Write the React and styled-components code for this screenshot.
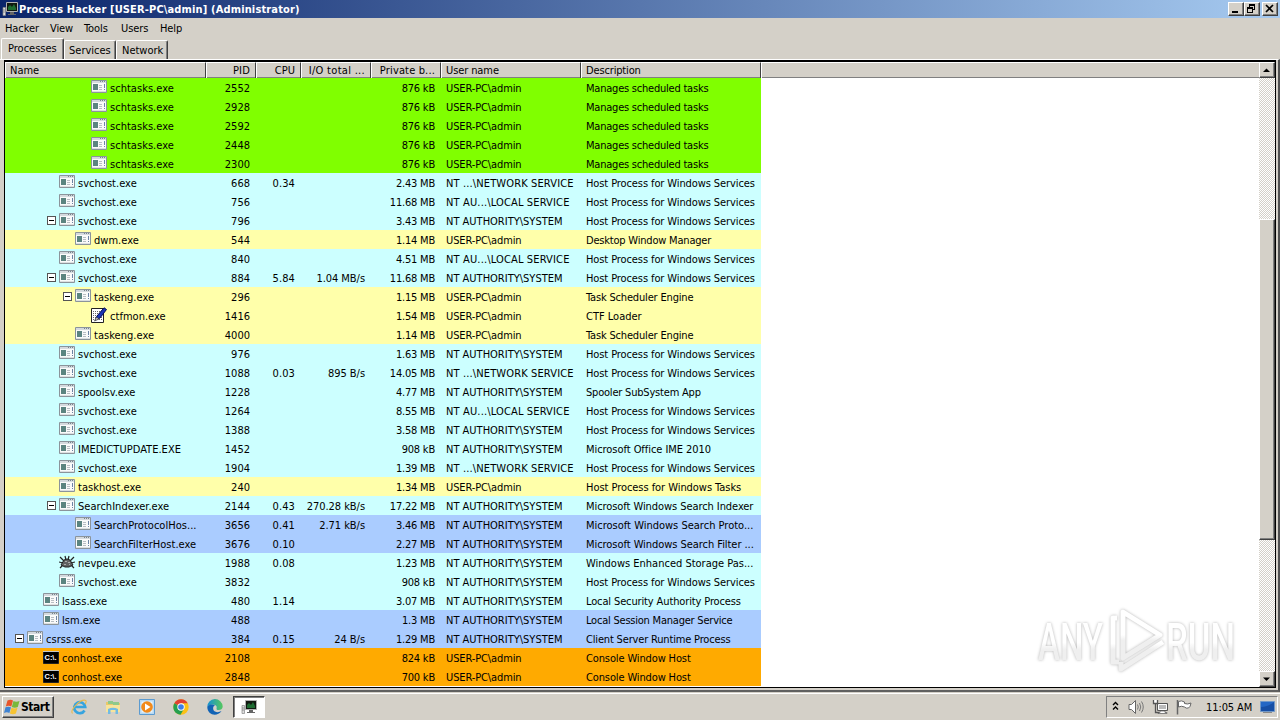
import React from "react";
import styled, { createGlobalStyle } from "styled-components";

const GlobalStyle = createGlobalStyle`
  * { box-sizing: border-box; }
  body {
    margin: 0;
    overflow: hidden;
    background: #d4d0c8;
    color: #000;
    font: 11px "DejaVu Sans Condensed", "DejaVu Sans", sans-serif;
    font-stretch: condensed;
  }
  svg { display: block; flex: none; }
`;

const Desktop = styled.div`
  width: 1280px;
  height: 720px;
  display: flex;
  flex-direction: column;
  white-space: pre;
`;

const TitleBar = styled.header`
  height: 18px;
  padding: 0 2px;
  display: flex;
  align-items: center;
  background: linear-gradient(90deg, #0a246a 0%, #a6caf0 100%);
`;

const Title = styled.span`
  margin-left: 1px;
  color: #fff;
  font-weight: bold;
  line-height: 19px;
  letter-spacing: 0.14px;
`;

const WindowButtons = styled.div`
  margin-left: auto;
  display: flex;
`;

const WindowButton = styled.span`
  width: 16px;
  height: 14px;
  margin-left: ${(p) => p.$gap || 0}px;
  background: #d4d0c8;
  border: 1px solid;
  border-color: #fff #404040 #404040 #fff;
  box-shadow: inset -1px -1px #808080;
`;

const MenuBar = styled.nav`
  height: 20px;
  display: flex;
  padding-left: 5px;
  line-height: 21px;
`;

const MenuItem = styled.span`
  width: ${(p) => p.$width}px;
  letter-spacing: -0.1px;
`;

const Tabs = styled.div`
  height: 21px;
  display: flex;
  align-items: flex-end;
  padding-left: 1px;
`;

const Tab = styled.span`
  width: ${(p) => p.$width}px;
  height: ${(p) => (p.$active ? 21 : 19)}px;
  padding-left: ${(p) => p.$pad}px;
  line-height: 19px;
  border: 1px solid;
  border-width: 1px 1px 0;
  border-color: #fff #404040 #fff #fff;
  box-shadow: inset -1px 0 #808080;
  border-radius: 2px 2px 0 0;
`;

const Panel = styled.main`
  height: 633px;
  display: flex;
  padding: 0 2px 2px 4px;
  border-top: 1px solid #fff;
  border-right: 2px solid #505050;
  border-bottom: 2px solid #606060;
`;

const ListView = styled.section`
  flex: 1;
  display: flex;
  border: 1px solid #000;
  border-top-width: 2px;
  background: #fff;
  min-width: 0;
`;

const Table = styled.div`
  flex: 1;
`;

const columns = "201px 50px 45px 70px 70px 140px 180px";

const HeaderRow = styled.div`
  height: 16px;
  display: grid;
  grid-template-columns: ${columns} 1fr;
  background: #d4d0c8;
  border-bottom: 1px solid #404040;
`;

const HeaderCell = styled.span`
  border-right: ${(p) => (p.$last ? 0 : 1)}px solid #404040;
  border-left: 1px solid #fff;
  border-top: 1px solid #fff;
  box-shadow: inset 0 -1px #808080;
  padding: 0 5px 0 4px;
  line-height: 15px;
  letter-spacing: ${(p) => p.$track || 0}px;
  text-align: ${(p) => (p.$right ? "right" : "left")};
`;

const ProcessRow = styled.div`
  width: 756px;
  height: 19px;
  display: grid;
  grid-template-columns: ${columns};
  background: ${(p) => p.$color};
  line-height: 22px;
`;

const NameCell = styled.span`
  height: 19px;
  display: flex;
  align-items: flex-start;
  padding-left: ${(p) => p.$indent}px;
`;

const IconSlot = styled.span`
  padding-top: 1px;
`;

const NameText = styled.span`
  margin-left: 3px;
  letter-spacing: 0.03px;
`;

const Cell = styled.span`
  height: 19px;
  padding: 0 6px 0 5px;
  letter-spacing: ${(p) => p.$track || 0}px;
  text-align: ${(p) => (p.$right ? "right" : "left")};
`;

const ScrollBar = styled.div`
  width: 16px;
  display: flex;
  flex-direction: column;
  background: repeating-conic-gradient(#fff 0 25%, #d4d0c8 0 50%) 0 0 / 2px 2px;
`;

const ScrollButton = styled.span`
  height: 16px;
  display: grid;
  place-items: center;
  background: #d4d0c8;
  border: 1px solid;
  border-color: #fff #404040 #404040 #fff;
  box-shadow: inset -1px -1px #808080;
`;

const ScrollThumb = styled(ScrollButton)`
  height: 321px;
  margin: 141px 0 auto;
`;

const Taskbar = styled.footer`
  height: 27px;
  margin-top: 1px;
  display: flex;
  align-items: flex-start;
  padding: 2px 2px 0;
  border-top: 1px solid #fff;
`;

const StartButton = styled.div`
  width: 52px;
  height: 22px;
  display: flex;
  align-items: center;
  padding-left: 1px;
  border: 1px solid;
  border-color: #fff #404040 #404040 #fff;
  box-shadow: inset -1px -1px #808080;
  font-size: 12px;
  font-weight: bold;
  letter-spacing: -0.45px;
`;

const Launchers = styled.div`
  display: flex;
  gap: 18px;
  margin: 3px 0 0 17px;
`;

const ActiveTask = styled.div`
  width: 32px;
  height: 22px;
  margin-left: 10px;
  padding: 2px 0 0 7px;
  background: #fff;
  border: 1px solid;
  border-color: #404040 #fff #fff #404040;
  box-shadow: inset 1px 1px #808080;
`;

const Tray = styled.div`
  width: 172px;
  height: 22px;
  margin-left: auto;
  display: flex;
  align-items: center;
  gap: 8px;
  padding-left: 5px;
  border: 1px solid;
  border-color: #808080 #fff #fff #808080;
`;

const Clock = styled.span`
  width: 46px;
  margin-left: 6px;
  letter-spacing: -0.1px;
`;

const Watermark = styled.div`
  position: absolute;
  left: 1030px;
  top: 600px;
  filter: drop-shadow(0 0 1.5px #b4b4b4);
`;

const WatermarkText = styled.text`
  font: 500 52px Roboto, sans-serif;
  fill: url(#fade);
`;

const AppIcon = () => (
  <svg width="16" height="16" viewBox="0 0 16 16">
    <path d="M1 6.5h2.5v8H1z" fill="#ddd" stroke="#888" strokeWidth=".7" />
    <path d="M1.5 9h1M1.5 11h1" stroke="#555" />
    <path d="M4.5 1.5h11v9h-11z" fill="#101810" stroke="#b0b0b0" />
    <path d="M6 9V6l2-2 2 2 2-3 2 4v2z" fill="#1d6b30" />
    <path d="M8 11h4v2h2v1H6v-1h2z" fill="#666" />
  </svg>
);

const ExeIcon = () => (
  <svg width="16" height="16" viewBox="0 0 16 16">
    <path d="M.5 1.5h15v12H.5z" fill="#fafafa" stroke="#8b949b" />
    <path d="M1 2h14v2H1z" fill="#d5dade" />
    <path d="M9 2.5h1M11 2.5h1M13 2.5h1" stroke="#77838d" />
    <path d="M2 5h5v6H2z" fill="#5b8480" />
    <path d="M8 6.5h3M8 8.5h3M8 10.5h3" stroke="#b8bec3" />
    <path d="M13.5 5v4M13.5 10v1" stroke="#6c84a5" />
    <path d="M1 12.5h14" stroke="#dcdfe0" />
  </svg>
);

const PenIcon = () => (
  <svg width="16" height="16" viewBox="0 0 16 16">
    <path d="M.5 1.5h12v14H.5z" fill="#fff" stroke="#222" />
    <path d="M2 4.5h9M2 6.5h9M2 8.5h9M2 10.5h9M2 12.5h9" stroke="#666" strokeDasharray="1 1" />
    <path d="M4.5 13l1.5-4L13 .8l2.5 1.7L9 11z" fill="#1a35b5" stroke="#000b55" />
    <path d="M3.5 14l2-4 2.5 2z" fill="#ccc" stroke="#222" strokeWidth=".6" />
  </svg>
);

const BugIcon = () => (
  <svg width="16" height="16" viewBox="0 0 16 16">
    <path d="M1 3l4 4M6 2l1 4M10 2L9 6M15 3l-4 4M0 8l4 1M16 8l-4 1M1 14l3-3M15 14l-3-3" stroke="#222" strokeWidth="1.2" />
    <path d="M2 11l3-5 3-1 3 1 3 5-4 2H6z" fill="#606060" stroke="#222" />
    <path d="M6 7.5h2M9 8.5h2M5 10.5h2M10 10.5h1" stroke="#aaa" />
  </svg>
);

const ConsoleText = styled.text`
  font: bold 7px "Liberation Sans", sans-serif;
  fill: #fff;
`;

const ConsoleIcon = () => (
  <svg width="16" height="16" viewBox="0 0 16 16">
    <path d="M.5 2.5h15v12H.5z" fill="#000" stroke="#222" />
    <path d="M0 2.5h16" stroke="#c8c8c8" />
    <ConsoleText x="1.5" y="11" textLength="12" lengthAdjust="spacingAndGlyphs">C:\.</ConsoleText>
  </svg>
);

const icons = { exe: ExeIcon, pen: PenIcon, bug: BugIcon, console: ConsoleIcon };

const Toggle = () => (
  <svg width="12" height="19" viewBox="0 0 12 19" shapeRendering="crispEdges">
    <path d="M.5 5.5h8v8h-8z" fill="#fff" stroke="#555" />
    <path d="M2 9.5h5" stroke="#000" />
  </svg>
);

const Arrow = ({ down }) => (
  <svg width="8" height="5" viewBox="0 0 8 5">
    <path d={down ? "M0 .5h7L3.5 4z" : "M0 4h7L3.5 .5z"} />
  </svg>
);

const MinimizeGlyph = () => (
  <svg width="13" height="11" viewBox="0 0 13 11">
    <path d="M3 8h6v2H3z" />
  </svg>
);

const RestoreGlyph = () => (
  <svg width="13" height="11" viewBox="0 0 13 11" shapeRendering="crispEdges">
    <path d="M4 1h6v2H4zM4 3h1v1H4zM9 3h1v4H9zM8 6h1v1H8zM2 4h6v2H2zM2 6h1v4H2zM7 6h1v4H7zM2 9h6v1H2z" />
  </svg>
);

const CloseGlyph = () => (
  <svg width="13" height="11" viewBox="0 0 13 11">
    <path d="M3 2l7 7M10 2L3 9" stroke="#000" strokeWidth="1.7" />
  </svg>
);

const WindowsFlag = () => (
  <svg width="17" height="16" viewBox="0 0 17 16">
    <path d="M3.5 1.5q3-1.5 5.500 0L7.300 7.500q-2.800-1.300-5.500 0z" fill="#e8552a" />
    <path d="M9.500 2q2.700 1.500 6 0l-1.700 6q-3 1.500-6 0z" fill="#79b83a" />
    <path d="M1.500 8.300q2.700-1.300 5.500 0l-1.600 5.700q-2.600-1.500-5.400 0z" fill="#3f83d2" />
    <path d="M7.500 8.800q3 1.400 6 0l-1.600 5.700q-3 1.500-6 0z" fill="#f6c332" />
  </svg>
);

const ExplorerIcon = () => (
  <svg width="16" height="16" viewBox="0 0 16 16">
    <path d="M13.500 11.500a5.500 5.500 0 1 1 .700-3.500H4.500" fill="none" stroke="#36a4df" strokeWidth="2.700" />
    <path d="M1.500 14.500C-1.500 11 9 .5 14 1.200c2 .3 1 2.800 0 4" fill="none" stroke="#e9b94c" strokeWidth="1.100" />
  </svg>
);

const FolderIcon = () => (
  <svg width="16" height="16" viewBox="0 0 16 16">
    <path d="M1 3h5l1 1h8v8H1z" fill="#e9c869" />
    <path d="M3 2h5v3H3zM8 3h6v3H8z" fill="#8fc98a" />
    <path d="M1 6h14v7H1z" fill="#f8e49b" />
    <path d="M3 15v-5q5-2.500 10 0v5h-2.500v-4h-5v4z" fill="#72bbe3" />
  </svg>
);

const MediaIcon = () => (
  <svg width="16" height="16" viewBox="0 0 16 16">
    <path d="M.5.5h15v15H.5z" fill="#b8d9f2" stroke="#5c9bd0" />
    <path d="M2.500 2.500h11v11h-11z" fill="#e9f4fc" />
    <circle cx="8" cy="8" r="5.800" fill="#f28a1b" />
    <path d="M6 4.500v7L11.500 8z" fill="#fff" />
  </svg>
);

const ChromeIcon = () => (
  <svg width="16" height="16" viewBox="0 0 16 16">
    <circle cx="8" cy="8" r="7.700" fill="#fbc116" />
    <path d="M8 8L1.300 4.200A7.700 7.700 0 0 1 14.700 4.200H8z" fill="#df4033" />
    <path d="M1.300 4.200A7.700 7.700 0 0 0 7.500 15.700L11 9.800 8 8z" fill="#269f4f" />
    <circle cx="8" cy="8" r="3.700" fill="#fff" />
    <circle cx="8" cy="8" r="2.800" fill="#3c7ee8" />
  </svg>
);

const EdgeIcon = () => (
  <svg width="16" height="16" viewBox="0 0 16 16">
    <defs>
      <linearGradient id="edge">
        <stop stopColor="#168fd3" />
        <stop offset="1" stopColor="#55c85d" />
      </linearGradient>
    </defs>
    <path d="M.3 8A7.700 7.700 0 0 1 15.700 7.500c0 2.500-2 3.500-4 3.500-3 0-2-1.500-2-3S7 5 4.500 5.700 1 7 .3 8z" fill="url(#edge)" />
    <path d="M.3 8C1 5.500 6 4.500 8 6.500 5.500 7 5.500 11 8 12.500c2 1.200 4.500.7 6.500-.5C10 18.500.3 16 .3 8z" fill="#1263b5" />
  </svg>
);

const ChevronsIcon = () => (
  <svg width="8" height="12" viewBox="0 0 8 12">
    <path d="M1 4l2.500-2.500L6 4M1 8.500L3.500 6 6 8.500" fill="none" stroke="#000" strokeWidth="1.400" />
  </svg>
);

const SpeakerIcon = () => (
  <svg width="16" height="16" viewBox="0 0 16 16">
    <path d="M1 5.500h2.500l4-4v13l-4-4H1z" fill="#fff" stroke="#666" />
    <path d="M9.500 5.500q1.500 2.500 0 5M11.500 4q2.500 4 0 8M13.500 2.500q3.500 5.500 0 11" fill="none" stroke="#777" />
  </svg>
);

const NetworkIcon = () => (
  <svg width="16" height="16" viewBox="0 0 16 16">
    <path d="M5.500 4.500h10v7h-10z" fill="#bbb" stroke="#555" />
    <path d="M6.500 5.500h8v5h-8z" fill="none" stroke="#fff" />
    <path d="M8 12h5v1.500h2v1H6v-1h2z" fill="#fff" stroke="#555" strokeWidth=".7" />
    <path d="M1.500 1v4h4V1z" fill="#fff" />
    <path d="M1.500 1v3.500h4V1M3.500 5v8.500H7" fill="none" stroke="#555" strokeWidth="1.300" />
  </svg>
);

const FlagIcon = () => (
  <svg width="16" height="16" viewBox="0 0 16 16">
    <path d="M1.500 1v14.500" stroke="#666" strokeWidth="1.500" />
    <path d="M2.500 2.500q3-1.500 6 .5v1.500q3 1.200 6.500-.5-.5 4-2.500 5-2.500.7-4-1-3-1.500-6 0z" fill="#fff" stroke="#666" />
  </svg>
);

const ShowDesktopIcon = () => (
  <svg width="15" height="14" viewBox="0 0 15 14">
    <path d="M.5 1.500h14v10H.5z" fill="#2467c5" stroke="#7198c8" />
    <path d="M1 7q7 0 13-5v9H1z" fill="#174fa5" />
    <path d="M3 12h9v1H3z" fill="#888" />
  </svg>
);

const AnyRunMark = () => (
  <svg width="240" height="90" viewBox="0 0 240 90">
    <defs>
      <linearGradient id="fade" x1="0" y1="0" x2="0" y2="1">
        <stop offset=".5" stopColor="#fff" />
        <stop offset=".62" stopColor="#efefef" />
      </linearGradient>
    </defs>
    <WatermarkText x="8" y="60" textLength="65" lengthAdjust="spacingAndGlyphs">ANY</WatermarkText>
    <WatermarkText x="136" y="60" textLength="69" lengthAdjust="spacingAndGlyphs">RUN</WatermarkText>
    <g fill="none" stroke="url(#fade)" strokeWidth="5" strokeLinejoin="round">
      <path d="M93 12L130 35 93 58z" />
      <path d="M87 18h-4v44h6M91 62v7L133 42" />
    </g>
  </svg>
);

const green = "#80ff00";
const cyan = "#ccffff";
const yellow = "#ffffaa";
const blue = "#aaccff";
const orange = "#ffaa00";
const sys = "NT AUTHORITY\\SYSTEM";
const net = "NT ...\\NETWORK SERVICE";
const local = "NT AU...\\LOCAL SERVICE";
const admin = "USER-PC\\admin";
const host = "Host Process for Windows Services";
const sched = "Manages scheduled tasks";

// letter spacing for strings that would run wide or narrow in their column
const tracking = {
  [net]: 0.13,
  [local]: 0.15,
  [admin]: -0.12,
  [host]: -0.1,
  [sched]: -0.22,
  "Desktop Window Manager": -0.2,
  "Task Scheduler Engine": -0.17,
  "Spooler SubSystem App": -0.2,
  "Microsoft Office IME 2010": -0.05,
  "Host Process for Windows Tasks": -0.05,
  "Microsoft Windows Search Indexer": -0.07,
  "Microsoft Windows Search Filter ...": -0.05,
  "Local Security Authority Process": -0.13,
  "Local Session Manager Service": -0.22,
  "Client Server Runtime Process": -0.17,
  "Console Window Host": -0.13,
};

// color, icon x, name, pid, cpu, io, private bytes, user, description, icon, has toggle
const processes = [
  [green, 86, "schtasks.exe", "2552", "", "", "876 kB", admin, sched],
  [green, 86, "schtasks.exe", "2928", "", "", "876 kB", admin, sched],
  [green, 86, "schtasks.exe", "2592", "", "", "876 kB", admin, sched],
  [green, 86, "schtasks.exe", "2448", "", "", "876 kB", admin, sched],
  [green, 86, "schtasks.exe", "2300", "", "", "876 kB", admin, sched],
  [cyan, 54, "svchost.exe", "668", "0.34", "", "2.43 MB", net, host],
  [cyan, 54, "svchost.exe", "756", "", "", "11.68 MB", local, host],
  [cyan, 54, "svchost.exe", "796", "", "", "3.43 MB", sys, host, "exe", true],
  [yellow, 70, "dwm.exe", "544", "", "", "1.14 MB", admin, "Desktop Window Manager"],
  [cyan, 54, "svchost.exe", "840", "", "", "4.51 MB", local, host],
  [cyan, 54, "svchost.exe", "884", "5.84", "1.04 MB/s", "11.68 MB", sys, host, "exe", true],
  [yellow, 70, "taskeng.exe", "296", "", "", "1.15 MB", admin, "Task Scheduler Engine", "exe", true],
  [yellow, 86, "ctfmon.exe", "1416", "", "", "1.54 MB", admin, "CTF Loader", "pen"],
  [yellow, 70, "taskeng.exe", "4000", "", "", "1.14 MB", admin, "Task Scheduler Engine"],
  [cyan, 54, "svchost.exe", "976", "", "", "1.63 MB", sys, host],
  [cyan, 54, "svchost.exe", "1088", "0.03", "895 B/s", "14.05 MB", net, host],
  [cyan, 54, "spoolsv.exe", "1228", "", "", "4.77 MB", sys, "Spooler SubSystem App"],
  [cyan, 54, "svchost.exe", "1264", "", "", "8.55 MB", local, host],
  [cyan, 54, "svchost.exe", "1388", "", "", "3.58 MB", sys, host],
  [cyan, 54, "IMEDICTUPDATE.EXE", "1452", "", "", "908 kB", sys, "Microsoft Office IME 2010"],
  [cyan, 54, "svchost.exe", "1904", "", "", "1.39 MB", net, host],
  [yellow, 54, "taskhost.exe", "240", "", "", "1.34 MB", admin, "Host Process for Windows Tasks"],
  [cyan, 54, "SearchIndexer.exe", "2144", "0.43", "270.28 kB/s", "17.22 MB", sys, "Microsoft Windows Search Indexer", "exe", true],
  [blue, 70, "SearchProtocolHos...", "3656", "0.41", "2.71 kB/s", "3.46 MB", sys, "Microsoft Windows Search Proto..."],
  [blue, 70, "SearchFilterHost.exe", "3676", "0.10", "", "2.27 MB", sys, "Microsoft Windows Search Filter ..."],
  [cyan, 54, "nevpeu.exe", "1988", "0.08", "", "1.23 MB", sys, "Windows Enhanced Storage Pas...", "bug"],
  [cyan, 54, "svchost.exe", "3832", "", "", "908 kB", sys, host],
  [cyan, 38, "lsass.exe", "480", "1.14", "", "3.07 MB", sys, "Local Security Authority Process"],
  [blue, 38, "lsm.exe", "488", "", "", "1.3 MB", sys, "Local Session Manager Service"],
  [blue, 22, "csrss.exe", "384", "0.15", "24 B/s", "1.29 MB", sys, "Client Server Runtime Process", "exe", true],
  [orange, 38, "conhost.exe", "2108", "", "", "824 kB", admin, "Console Window Host", "console"],
  [orange, 38, "conhost.exe", "2848", "", "", "700 kB", admin, "Console Window Host", "console"],
];

function Process({ data }) {
  const [color, x, name, pid, cpu, io, bytes, user, description, icon = "exe", toggle] = data;
  const Icon = icons[icon];
  return (
    <ProcessRow $color={color}>
      <NameCell $indent={toggle ? x - 12 : x}>
        {toggle && <Toggle />}
        <IconSlot>
          <Icon />
        </IconSlot>
        <NameText>{name}</NameText>
      </NameCell>
      <Cell $right>{pid}</Cell>
      <Cell $right $track={0.1}>{cpu}</Cell>
      <Cell $right $track={-0.05}>{io}</Cell>
      <Cell $right $track={-0.2}>{bytes}</Cell>
      <Cell $track={tracking[user]}>{user}</Cell>
      <Cell $track={tracking[description]}>{description}</Cell>
    </ProcessRow>
  );
}

function App() {
  return (
    <Desktop>
      <GlobalStyle />
      <TitleBar>
        <AppIcon />
        <Title>Process Hacker [USER-PC\admin] (Administrator)</Title>
        <WindowButtons>
          <WindowButton><MinimizeGlyph /></WindowButton>
          <WindowButton><RestoreGlyph /></WindowButton>
          <WindowButton $gap={2}><CloseGlyph /></WindowButton>
        </WindowButtons>
      </TitleBar>
      <MenuBar>
        <MenuItem $width={45}>Hacker</MenuItem>
        <MenuItem $width={34}>View</MenuItem>
        <MenuItem $width={37}>Tools</MenuItem>
        <MenuItem $width={39}>Users</MenuItem>
        <MenuItem $width={39}>Help</MenuItem>
      </MenuBar>
      <Tabs>
        <Tab $width={63} $pad={6} $active>Processes</Tab>
        <Tab $width={52} $pad={4}>Services</Tab>
        <Tab $width={52} $pad={5}>Network</Tab>
      </Tabs>
      <Panel>
        <ListView>
          <Table>
            <HeaderRow>
              <HeaderCell>Name</HeaderCell>
              <HeaderCell $right $track={0.2}>PID</HeaderCell>
              <HeaderCell $right>CPU</HeaderCell>
              <HeaderCell $right $track={0.3}>I/O total ...</HeaderCell>
              <HeaderCell $right $track={0.15}>Private b...</HeaderCell>
              <HeaderCell $track={-0.1}>User name</HeaderCell>
              <HeaderCell $track={-0.15}>Description</HeaderCell>
              <HeaderCell $last />
            </HeaderRow>
            {processes.map((p) => (
              <Process key={p[3]} data={p} />
            ))}
          </Table>
          <ScrollBar>
            <ScrollButton><Arrow /></ScrollButton>
            <ScrollThumb />
            <ScrollButton><Arrow down /></ScrollButton>
          </ScrollBar>
        </ListView>
      </Panel>
      <Taskbar>
        <StartButton>
          <WindowsFlag />
          Start
        </StartButton>
        <Launchers>
          <ExplorerIcon />
          <FolderIcon />
          <MediaIcon />
          <ChromeIcon />
          <EdgeIcon />
        </Launchers>
        <ActiveTask>
          <AppIcon />
        </ActiveTask>
        <Tray>
          <ChevronsIcon />
          <SpeakerIcon />
          <NetworkIcon />
          <FlagIcon />
          <Clock>11:05 AM</Clock>
          <ShowDesktopIcon />
        </Tray>
      </Taskbar>
      <Watermark>
        <AnyRunMark />
      </Watermark>
    </Desktop>
  );
}

export default App;
